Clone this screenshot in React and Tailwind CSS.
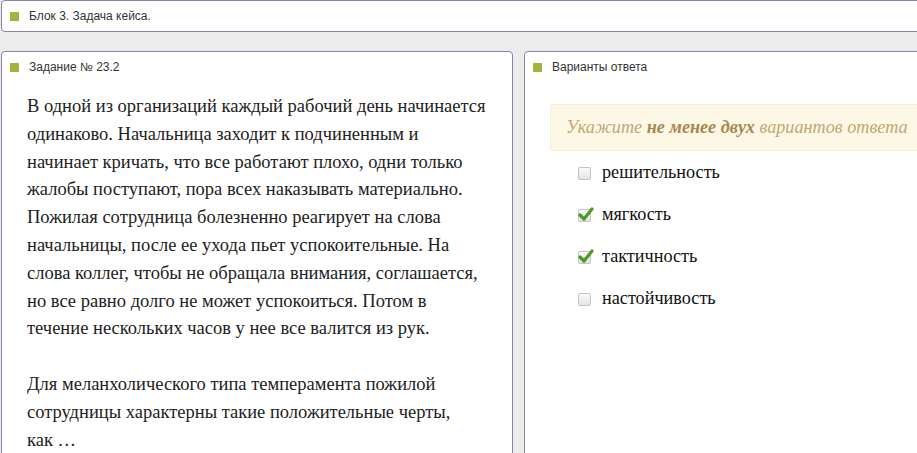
import React from "react";

const options = [
  { label: "решительность", checked: false },
  { label: "мягкость", checked: true },
  { label: "тактичность", checked: true },
  { label: "настойчивость", checked: false },
];

function PanelTitle({ children }) {
  return (
    <div className="flex items-center h-[30px] pl-[8px] text-[12px] text-[#333] font-['Liberation_Sans',Arial,sans-serif]">
      <span className="w-[9px] h-[9px] bg-[#9db63b] mr-[10px]" />
      {children}
    </div>
  );
}

function Box({ checked }) {
  return (
    <span className="relative w-[13px] h-[13px] rounded-[2px] border border-[#c3c3c3] bg-gradient-to-b from-[#fafafa] to-[#e4e4e4]">
      {checked && (
        <svg viewBox="0 0 16 16" className="absolute left-[-1px] top-[-4px] w-[16px] h-[16px]">
          <path d="M2 9 L6 13 L14 3" fill="none" stroke="#4c9a1f" strokeWidth="3.2" strokeLinecap="round" strokeLinejoin="round" />
        </svg>
      )}
    </span>
  );
}

export default function App() {
  return (
    <div className="w-[917px] h-[453px] overflow-hidden bg-[#ececec]">
      <div className="ml-[1px] w-[940px] h-[32px] bg-white border border-[#7f86aa] rounded-[4px]">
        <PanelTitle>Блок 3. Задача кейса.</PanelTitle>
      </div>
      <div className="flex gap-[11px] mt-[19px] ml-[1px]">
        <div className="w-[512px] h-[420px] shrink-0 bg-white border border-[#7f86aa] rounded-[4px]">
          <PanelTitle>Задание № 23.2</PanelTitle>
          <div className="ml-[25px] pt-[11px] w-[462px] text-[18.5px] leading-[27.8px] text-[#222] font-['Liberation_Serif','Times_New_Roman',serif]">
            <p>
              В одной из организаций каждый рабочий день начинается одинаково. Начальница заходит к подчиненным и начинает кричать, что все работают плохо, одни только жалобы поступают, пора всех наказывать материально. Пожилая сотрудница болезненно реагирует на слова начальницы, после ее ухода пьет успокоительные. На слова коллег, чтобы не обращала внимания, соглашается, но все равно долго не может успокоиться. Потом в течение нескольких часов у нее все валится из рук.
            </p>
            <p className="mt-[27.8px]">
              Для меланхолического типа темперамента пожилой сотрудницы характерны такие положительные черты, как&nbsp;…
            </p>
          </div>
        </div>
        <div className="w-[420px] h-[420px] shrink-0 bg-white border border-[#7f86aa] rounded-[4px]">
          <PanelTitle>Варианты ответа</PanelTitle>
          <div className="pl-[25px] pt-[22px]">
            <div className="h-[47px] flex items-center pl-[15px] bg-[#fcf8e5] border border-[#f6eed2] rounded-[3px] text-[18.2px] italic text-[#c4a671] font-['Liberation_Serif','Times_New_Roman',serif] whitespace-nowrap">
              Укажите&nbsp;<b className="text-[#a8874e]">не менее двух</b>&nbsp;вариантов ответа
            </div>
            <div className="pt-[1px] pl-[28px]">
              {options.map((o) => (
                <label key={o.label} className="flex items-center h-[42px] gap-[11px] text-[18.2px] text-[#111] font-['Liberation_Serif','Times_New_Roman',serif]">
                  <Box checked={o.checked} />
                  {o.label}
                </label>
              ))}
            </div>
          </div>
        </div>
      </div>
    </div>
  );
}
